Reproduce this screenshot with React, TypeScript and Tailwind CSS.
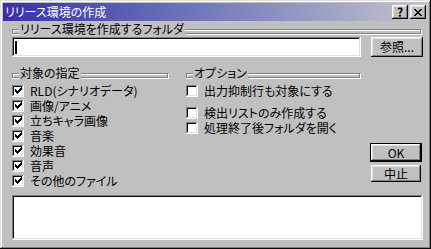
import React from 'react';

const raised =
	'shadow-[inset_-1px_-1px_#0a0a0a,inset_1px_1px_#ffffff,inset_-2px_-2px_#808080,inset_2px_2px_#dfdfdf]';
const sunken =
	'shadow-[inset_-1px_-1px_#ffffff,inset_1px_1px_#808080,inset_-2px_-2px_#dfdfdf,inset_2px_2px_#0a0a0a]';

function GroupHeader({ label, className = '' }: { label: string; className?: string }) {
	return (
		<div className={`flex items-start h-[14px] ${className}`}>
			<div className="w-[7px] h-[5px] mt-[7px] border-t border-l border-b border-[#808080] shadow-[inset_1px_1px_#ffffff,0_1px_#ffffff]" />
			<span className="px-[1px] leading-[14px]">{label}</span>
			<div className="flex-1 h-[5px] mt-[7px] border-t border-r border-b border-[#808080] shadow-[inset_0_1px_#ffffff,1px_1px_#ffffff]" />
		</div>
	);
}

function CheckBox({ label, checked }: { label: string; checked?: boolean }) {
	return (
		<div className="flex items-center h-[15px] gap-[6px]">
			<div className={`w-[12px] h-[12px] bg-white flex items-center justify-center ${sunken}`}>
				{checked && (
					<svg width="7" height="7" viewBox="0 0 7 7" shapeRendering="crispEdges">
						{/* Win98 style check mark */}
						<path d="M0 2h1v3H0zM1 3h1v3H1zM2 4h1v3H2zM3 3h1v3H3zM4 2h1v3H4zM5 1h1v3H5zM6 0h1v3H6z" fill="#000" />
					</svg>
				)}
			</div>
			<span className="leading-[12px] whitespace-nowrap">{label}</span>
		</div>
	);
}

export default function App() {
	const targets = ['RLD(シナリオデータ)', '画像/アニメ', '立ちキャラ画像', '音楽', '効果音', '音声', 'その他のファイル'];

	return (
		<div
			className="w-[431px] h-[249px] bg-[#c0c0c0] p-[3px] flex flex-col text-[12px] text-black shadow-[inset_-1px_-1px_#0a0a0a,inset_1px_1px_#dfdfdf,inset_-2px_-2px_#808080,inset_2px_2px_#ffffff] [font-feature-settings:'palt']"
			style={{ fontFamily: '"Noto Sans CJK JP", "Liberation Sans", sans-serif' }}
		>
			{/* Title bar */}
			<div className="h-[18px] flex items-center pl-[2px] pr-[2px] bg-gradient-to-r from-[#3a2ea5] to-[#c4c4cc]">
				<span className="flex-1 text-white leading-[18px]">リリース環境の作成</span>
				<div className="flex gap-[2px]">
					<div className={`w-[16px] h-[14px] bg-[#c0c0c0] flex items-center justify-center font-bold text-[12px] leading-none ${raised}`}>
						?
					</div>
					<div className={`w-[16px] h-[14px] bg-[#c0c0c0] flex items-center justify-center ${raised}`}>
						<svg width="8" height="7" viewBox="0 0 8 7" shapeRendering="crispEdges">
							<path d="M0 0h2v1H0zM6 0h2v1H6zM1 1h2v1H1zM5 1h2v1H5zM2 2h4v1H2zM3 3h2v1H3zM2 4h4v1H2zM1 5h2v1H1zM5 5h2v1H5zM0 6h2v1H0zM6 6h2v1H6z" fill="#000" />
						</svg>
					</div>
				</div>
			</div>

			{/* Body */}
			<div className="flex flex-col pl-[9px] pr-[5px] pt-[1px]">
				<GroupHeader label="リリース環境を作成するフォルダ" className="w-[409px]" />
				<div className="flex mt-[1px] gap-[10px]">
					<div className={`w-[349px] h-[20px] bg-white flex items-center pl-[3px] ${sunken}`}>
						<div className="w-[2px] h-[13px] bg-black" />
					</div>
					<div className={`w-[52px] h-[20px] flex items-center justify-center ${raised}`}>参照...</div>
				</div>

				<div className="flex mt-[9px]">
					<div className="w-[156px] flex flex-col">
						<GroupHeader label="対象の指定" />
						<div className="flex flex-col mt-[3px]">
							{targets.map((t) => (
								<CheckBox key={t} label={t} checked />
							))}
						</div>
					</div>
					<div className="w-[174px] ml-[18px] flex flex-col">
						<GroupHeader label="オプション" />
						<div className="flex flex-col mt-[3px]">
							<CheckBox label="出力抑制行も対象にする" />
							<div className="mt-[7px]">
								<CheckBox label="検出リストのみ作成する" />
								<CheckBox label="処理終了後フォルダを開く" />
							</div>
						</div>
					</div>
					<div className="flex flex-col ml-[10px] pt-[77px]">
						<div className="w-[52px] h-[19px] border border-black">
							<div className={`w-full h-full flex items-center justify-center ${raised}`}>OK</div>
						</div>
						<div className={`w-[50px] h-[17px] ml-[1px] mt-[3px] flex items-center justify-center ${raised}`}>中止</div>
					</div>
				</div>

				<div className={`mt-[7px] w-[411px] h-[45px] bg-white ${sunken}`} />
			</div>
		</div>
	);
}
